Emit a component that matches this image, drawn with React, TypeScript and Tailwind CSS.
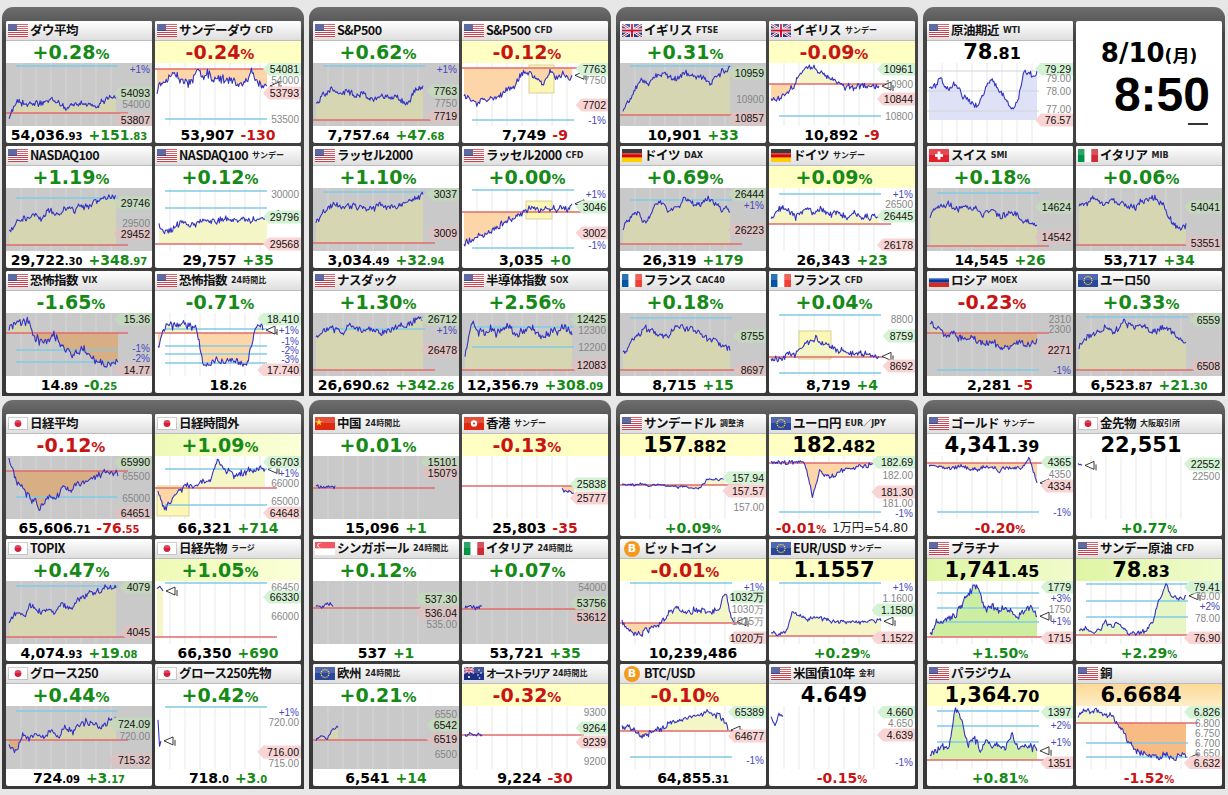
import type { ReactNode } from 'react';

// ── 型 ──
type FlagK = 'us' | 'jp' | 'uk' | 'de' | 'fr' | 'ch' | 'it' | 'ru' | 'eu' | 'cn' | 'hk' | 'sg' | 'au' | 'btc';
type Lb = [number, string, 'h' | 'l' | 'g' | 'p'];
interface Ch {
  g?: boolean;
  x0?: number;
  x1: number;
  s: number[];
  sd: number;
  nz?: number;
  b?: number;
  nb?: boolean;
  bl?: number[];
  gh?: number[];
  lb: Lb[];
  mk?: boolean;
  hl?: [number, number, number, number];
  up?: string;
  dn?: string;
}
interface Cd {
  f: FlagK;
  n: string;
  sub?: string;
  top?: 'w' | 'y' | 'gy' | 'lg' | 'or';
  big: ReactNode;
  bot?: ReactNode;
  ch: Ch;
  nc?: string;
}

// ── テキスト部品 ──
const col = (c: 'g' | 'r') => (c === 'g' ? 'text-[#168a16]' : 'text-[#c91414]');
const P = (v: string, c: 'g' | 'r') => (
  <span className={`text-[19px] ${col(c)}`}>
    {v}
    <span className="text-[14px]">%</span>
  </span>
);
const N = (a: string, b = '') => (
  <span className="text-[21px] text-black">
    {a}
    <span className="text-[16px]">{b}</span>
  </span>
);
const V = (a: string, b = '') => (
  <span className="text-black">
    {a}
    <span className="text-[10px]">{b}</span>
  </span>
);
const C = (a: string, b: string, c: 'g' | 'r') => (
  <span className={col(c)}>
    {a}
    <span className="text-[10px]">{b}</span>
  </span>
);
const P2 = (v: string, c: 'g' | 'r') => (
  <span className={col(c)}>
    {v}
    <span className="text-[10px]">%</span>
  </span>
);

// ── 乱数 ──
function rnd(seed: number) {
  let a = (seed * 7919) >>> 0;
  return () => {
    a = (a + 0x6d2b79f5) >>> 0;
    let t = a;
    t = Math.imul(t ^ (t >>> 15), t | 1);
    t ^= t + Math.imul(t ^ (t >>> 7), t | 61);
    return ((t ^ (t >>> 14)) >>> 0) / 4294967296;
  };
}

function linePts(c: Ch, h: number): [number, number][] {
  const r = rnd(c.sd);
  const x0 = c.x0 ?? 3;
  const n = Math.max(3, Math.round((c.x1 - x0) * 1.1));
  const nz = c.nz ?? 5;
  const out: [number, number][] = [];
  let w = 0;
  for (let i = 0; i < n; i++) {
    const t = (i / (n - 1)) * (c.s.length - 1);
    const k = Math.min(Math.floor(t), c.s.length - 2);
    const f = t - k;
    const base = c.s[k] + (c.s[k + 1] - c.s[k]) * f;
    w = w * 0.6 + (r() - 0.5) * nz * 0.8;
    const j = (r() - 0.5) * nz * 0.9;
    const y = Math.max(1, Math.min(h - 2, base + w + j));
    out.push([+(x0 + (i / (n - 1)) * (c.x1 - x0)).toFixed(1), +y.toFixed(1)]);
  }
  return out;
}

function Chart({ c, h, id }: { c: Ch; h: number; id: string }) {
  const pts = linePts(c, h);
  const x0 = pts[0][0];
  const x1 = pts[pts.length - 1][0];
  const yl = pts[pts.length - 1][1];
  const line = pts.map((p) => p.join(',')).join(' ');
  const b = c.b;
  const grid = c.g ? '#d6d6d6' : '#e8e8e8';
  const upC = c.up ?? (c.g ? '#d6d6b2' : '#f4f6c8');
  const dnC = c.dn ?? (c.g ? '#d8ae84' : '#fcd5a8');
  return (
    <svg width="146" height={h} className="block" fontFamily="'Liberation Sans', Arial, sans-serif">
      {[15, 30, 45, 60, 75, 90, 105].map((x) => (
        <line key={x} x1={x} x2={x} y1={0} y2={h} stroke={grid} strokeWidth="1" />
      ))}
      {c.hl && <rect x={c.hl[0]} y={c.hl[1]} width={c.hl[2]} height={c.hl[3]} fill="#fcf7b4" stroke="#cfc78a" strokeWidth="0.8" />}
      {b !== undefined && (
        <>
          <defs>
            <clipPath id={`${id}a`}>
              <rect x="0" y="0" width="146" height={b} />
            </clipPath>
            <clipPath id={`${id}b`}>
              <rect x="0" y={b} width="146" height={h - b} />
            </clipPath>
          </defs>
          <polygon points={`${line} ${x1},${b} ${x0},${b}`} fill={upC} clipPath={`url(#${id}a)`} />
          <polygon points={`${line} ${x1},${b} ${x0},${b}`} fill={dnC} clipPath={`url(#${id}b)`} />
        </>
      )}
      {c.gh?.map((y) => (
        <line key={`g${y}`} x1={0} x2={112} y1={y} y2={y} stroke="#d4d4d4" strokeWidth="1" />
      ))}
      {c.bl?.map((y) => (
        <line key={`b${y}`} x1={10} x2={112} y1={y} y2={y} stroke="#7fcbe6" strokeWidth="1.3" />
      ))}
      {b !== undefined && !c.nb && <line x1={0} x2={122} y1={b} y2={b} stroke="#e36a6a" strokeWidth="1.3" />}
      <polyline points={line} fill="none" stroke="#3434c4" strokeWidth="1.1" strokeLinejoin="round" />
      {c.mk && (
        <g>
          <polygon
            points={`${x1 + 3},${yl} ${x1 + 12},${yl - 4} ${x1 + 12},${yl + 4}`}
            fill="#fff"
            stroke="#222"
            strokeWidth="0.9"
          />
          <line x1={x1 + 14} x2={x1 + 14} y1={yl - 1} y2={yl + 5} stroke="#222" strokeWidth="0.9" />
        </g>
      )}
      {c.lb.map(([y, t, k], i) => {
        const yy = Math.max(6, Math.min(h - 6, y));
        if (k === 'h' || k === 'l') {
          const w = t.length * 5.6 + 4;
          const x = 146 - w;
          return (
            <g key={i}>
              <polygon
                points={`${x - 6},${yy} ${x},${yy - 6.5} 146,${yy - 6.5} 146,${yy + 6.5} ${x},${yy + 6.5}`}
                fill={k === 'h' ? (c.g ? '#c4d8be' : '#d4f2d4') : c.g ? '#dcc2c2' : '#f9d4d4'}
              />
              <text x="144" y={yy + 3.8} textAnchor="end" fontSize="10.5" fill="#111">
                {t}
              </text>
            </g>
          );
        }
        return (
          <text key={i} x="144" y={yy + 3.5} textAnchor="end" fontSize="10" fill={k === 'p' ? '#4646c0' : '#868686'}>
            {t}
          </text>
        );
      })}
    </svg>
  );
}

// ── 国旗 ──
function Flag({ k }: { k: FlagK }) {
  if (k === 'btc')
    return (
      <span className="w-[16px] h-[16px] rounded-full bg-[#f39a1e] text-white text-[11px] font-bold flex items-center justify-center leading-none">
        B
      </span>
    );
  let body: ReactNode = null;
  if (k === 'us')
    body = (
      <>
        <rect width="20" height="13" fill="#fff" />
        {[0, 2, 4, 6, 8, 10, 12].map((y) => (
          <rect key={y} y={y} width="20" height="1" fill="#d0404c" />
        ))}
        <rect width="9" height="7" fill="#3d4a8c" />
      </>
    );
  if (k === 'jp')
    body = (
      <>
        <rect x="0.5" y="0.5" width="19" height="12" fill="#fff" stroke="#c4c4c4" />
        <circle cx="10" cy="6.5" r="3.4" fill="#d41f3c" />
      </>
    );
  if (k === 'uk' || k === 'au')
    body = (
      <>
        <rect width="20" height="13" fill={k === 'uk' ? '#1f3a8a' : '#1b2f86'} />
        <g transform={k === 'au' ? 'scale(0.5)' : undefined}>
          <path d="M0,0 L20,13 M20,0 L0,13" stroke="#fff" strokeWidth="2.6" />
          <path d="M0,0 L20,13 M20,0 L0,13" stroke="#c8102e" strokeWidth="1" />
          <path d="M10,0 V13 M0,6.5 H20" stroke="#fff" strokeWidth="4" />
          <path d="M10,0 V13 M0,6.5 H20" stroke="#c8102e" strokeWidth="2.2" />
        </g>
        {k === 'au' && (
          <>
            <circle cx="5" cy="10" r="1.1" fill="#fff" />
            <circle cx="15" cy="3" r="0.8" fill="#fff" />
            <circle cx="17" cy="6" r="0.8" fill="#fff" />
            <circle cx="14" cy="8" r="0.8" fill="#fff" />
            <circle cx="15.5" cy="11" r="0.8" fill="#fff" />
          </>
        )}
      </>
    );
  if (k === 'de')
    body = (
      <>
        <rect width="20" height="4.4" fill="#111" />
        <rect y="4.3" width="20" height="4.4" fill="#dd0000" />
        <rect y="8.6" width="20" height="4.4" fill="#ffce00" />
      </>
    );
  if (k === 'fr' || k === 'it')
    body = (
      <>
        <rect width="6.7" height="13" fill={k === 'fr' ? '#0055a4' : '#009246'} />
        <rect x="6.6" width="6.8" height="13" fill="#fff" />
        <rect x="13.3" width="6.7" height="13" fill={k === 'fr' ? '#ef4135' : '#ce2b37'} />
      </>
    );
  if (k === 'ru')
    body = (
      <>
        <rect width="20" height="4.4" fill="#fff" />
        <rect y="4.3" width="20" height="4.4" fill="#0039a6" />
        <rect y="8.6" width="20" height="4.4" fill="#d52b1e" />
      </>
    );
  if (k === 'ch')
    body = (
      <>
        <rect width="20" height="13" fill="#e0202a" />
        <rect x="8.6" y="2.5" width="2.8" height="8" fill="#fff" />
        <rect x="6" y="5.1" width="8" height="2.8" fill="#fff" />
      </>
    );
  if (k === 'eu')
    body = (
      <>
        <rect width="20" height="13" fill="#2a47a0" />
        {Array.from({ length: 12 }).map((_, i) => (
          <circle
            key={i}
            cx={10 + 4 * Math.cos((i * Math.PI) / 6)}
            cy={6.5 + 4 * Math.sin((i * Math.PI) / 6)}
            r="0.7"
            fill="#ffd21f"
          />
        ))}
      </>
    );
  if (k === 'cn')
    body = (
      <>
        <rect width="20" height="13" fill="#de2910" />
        <polygon points="4,1.5 4.9,4.2 7.6,4.2 5.4,5.8 6.2,8.4 4,6.8 1.8,8.4 2.6,5.8 0.4,4.2 3.1,4.2" fill="#ffde00" />
      </>
    );
  if (k === 'hk')
    body = (
      <>
        <rect width="20" height="13" fill="#de2910" />
        <circle cx="10" cy="6.5" r="3.2" fill="#fff" />
        <circle cx="10" cy="6.5" r="1" fill="#de2910" />
      </>
    );
  if (k === 'sg')
    body = (
      <>
        <rect width="20" height="6.5" fill="#ef3340" />
        <rect y="6.5" width="20" height="6.5" fill="#fff" />
        <circle cx="4.5" cy="3.3" r="2.2" fill="#fff" />
        <circle cx="5.4" cy="3.3" r="2" fill="#ef3340" />
      </>
    );
  return (
    <svg width="20" height="13" viewBox="0 0 20 13" className="block">
      {body}
      <rect width="20" height="6" fill="#fff" opacity="0.18" />
    </svg>
  );
}

// ── カード ──
const topCls = {
  w: 'bg-white',
  y: 'bg-[#ffffc4]',
  gy: 'bg-[linear-gradient(90deg,#eefab6,#fbffd8)]',
  lg: 'bg-[linear-gradient(90deg,#dff5a4,#f1fbcc)]',
  or: 'bg-[linear-gradient(#fcd998,#fdeec6)]',
};

function Card({ d, id }: { d: Cd; id: string }) {
  const h = d.bot === undefined ? 80 : 63;
  return (
    <div className="h-[122px] bg-white rounded-[2px] flex flex-col overflow-hidden">
      <div className="h-[20px] shrink-0 flex items-center bg-[linear-gradient(#ffffff,#dedede)] border-b border-[#bdbdbd]">
        <div className="w-[24px] shrink-0 flex justify-center">
          <Flag k={d.f} />
        </div>
        <span className={`font-bold leading-none whitespace-nowrap text-[#111] font-['Noto_Sans_CJK_JP',sans-serif] ${d.nc ?? 'text-[12.5px] tracking-[-0.5px]'}`}>
          {d.n}
        </span>
        {d.sub && (
          <span className="ml-[4px] text-[8px] font-bold leading-none whitespace-nowrap text-[#222] font-['DejaVu_Sans','Noto_Sans_CJK_JP',sans-serif]">
            {d.sub}
          </span>
        )}
      </div>
      <div className={`h-[22px] shrink-0 flex items-center justify-center pr-[16px] font-bold leading-none ${topCls[d.top ?? 'w']}`}>
        {d.big}
      </div>
      <div className={d.ch.g ? 'bg-[#c9c9c9]' : 'bg-white'}>
        <Chart c={d.ch} h={h} id={id} />
      </div>
      {d.bot !== undefined && (
        <div className="h-[17px] flex items-center justify-center gap-[6px] text-[14px] font-bold leading-none whitespace-nowrap">
          {d.bot}
        </div>
      )}
    </div>
  );
}

function Clock() {
  return (
    <div className="h-[122px] bg-white rounded-[2px] flex flex-col items-center">
      <div className="mt-[19px] text-[26px] font-bold leading-none text-black">
        8/10<span className="text-[17px]">(月)</span>
      </div>
      <div className="mt-[5px] self-end mr-[12px] text-[48px] font-bold leading-none text-black font-['Liberation_Sans',Arial,sans-serif]">
        8:50
      </div>
      <div className="mt-[4px] self-end mr-[14px] w-[20px] h-[2px] bg-[#333]" />
    </div>
  );
}

// ── データ ──
const TOP: (Cd | 'clock')[][] = [
  [
    { f: 'us', n: 'ダウ平均', big: P('+0.28', 'g'), bot: <>{V('54,036', '.93')}{C('+151', '.83', 'g')}</>, ch: { g: true, x1: 110, sd: 1, s: [54, 38, 40, 42, 37, 40, 44, 41, 40, 45, 34, 35], b: 50, bl: [3], lb: [[3, '+1%', 'p'], [30, '54093', 'h'], [41, '54000', 'g'], [57, '53807', 'l']] } },
    { f: 'us', n: 'サンデーダウ', sub: 'CFD', top: 'y', big: P('-0.24', 'r'), bot: <>{V('53,907')}{C('-130', '', 'r')}</>, ch: { x0: 2, x1: 112, sd: 2, nz: 7, s: [26, 20, 10, 16, 22, 8, 12, 14, 16, 18, 17, 21, 10, 22, 22], b: 6, bl: [56], lb: [[5, '54081', 'h'], [17, '54000', 'g'], [30, '53793', 'l'], [56, '53500', 'g']], mk: true } },
    { f: 'us', n: 'NASDAQ100', big: P('+1.19', 'g'), bot: <>{V('29,722', '.30')}{C('+348', '.97', 'g')}</>, ch: { g: true, x1: 110, sd: 3, s: [42, 32, 30, 26, 30, 22, 25, 20, 22, 18, 16, 12, 10, 8], b: 57, bl: [10], lb: [[15, '29746', 'h'], [35, '29500', 'g'], [46, '29452', 'l']] } },
    { f: 'us', n: 'NASDAQ100', sub: 'サンデー', big: P('+0.12', 'g'), bot: <>{V('29,757')}{C('+35', '', 'g')}</>, ch: { x0: 4, x1: 112, sd: 4, s: [36, 44, 38, 36, 35, 33, 34, 32, 31, 31, 32, 30, 30], b: 56, bl: [3, 20], lb: [[3, '30000', 'g'], [29, '29796', 'h'], [56, '29568', 'l']], mk: true } },
    { f: 'us', n: '恐怖指数', sub: 'VIX', big: P('-1.65', 'g'), bot: <>{V('14', '.89')}{C('-0', '.25', 'g')}</>, ch: { g: true, x1: 112, sd: 5, nz: 6, s: [16, 12, 8, 26, 30, 22, 34, 40, 34, 44, 48, 50, 52], b: 20, bl: [37, 49], lb: [[4, '15.36', 'h'], [35, '-1%', 'p'], [45, '-2%', 'p'], [58, '14.77', 'l']] } },
    { f: 'us', n: '恐怖指数', sub: '24時間比', big: P('-0.71', 'g'), bot: V('18', '.26'), ch: { x1: 108, sd: 6, nz: 6, s: [34, 12, 12, 13, 12, 14, 50, 52, 46, 50, 44, 52, 50, 14, 12], b: 20, bl: [16, 33, 41, 50], lb: [[4, '18.410', 'h'], [17, '+1%', 'p'], [28, '-1%', 'p'], [37, '-2%', 'p'], [46, '-3%', 'p'], [58, '17.740', 'l']], mk: true } },
  ],
  [
    { f: 'us', n: 'S&P500', big: P('+0.62', 'g'), bot: <>{V('7,757', '.64')}{C('+47', '.68', 'g')}</>, ch: { g: true, x1: 110, sd: 7, s: [40, 32, 26, 30, 28, 32, 28, 36, 37, 32, 34, 36, 40, 26, 23], b: 57, bl: [3], lb: [[3, '+1%', 'p'], [28, '7763', 'h'], [40, '7750', 'g'], [53, '7719', 'l']] } },
    { f: 'us', n: 'S&P500', sub: 'CFD', top: 'y', big: P('-0.12', 'r'), bot: <>{V('7,749')}{C('-9', '', 'r')}</>, ch: { x0: 2, x1: 110, sd: 8, s: [33, 36, 39, 37, 34, 31, 27, 22, 12, 8, 14, 20, 8, 16, 11, 13], b: 5, bl: [57], hl: [67, 2, 25, 28], lb: [[5, '7763', 'h'], [17, '7750', 'g'], [42, '7702', 'l'], [57, '-1%', 'p']], mk: true } },
    { f: 'us', n: 'ラッセル2000', big: P('+1.10', 'g'), bot: <>{V('3,034', '.49')}{C('+32', '.94', 'g')}</>, ch: { g: true, x1: 110, sd: 9, s: [32, 22, 16, 20, 18, 20, 22, 18, 15, 20, 18, 15, 10, 6], b: 55, bl: [4], lb: [[3, '3037', 'h'], [45, '3009', 'l']] } },
    { f: 'us', n: 'ラッセル2000', sub: 'CFD', big: P('+0.00', 'g'), bot: <>{V('3,035')}{C('+0', '', 'g')}</>, ch: { x0: 2, x1: 110, sd: 10, s: [56, 52, 48, 45, 42, 36, 32, 28, 22, 17, 21, 20, 20, 21, 20], b: 24, bl: [2, 60], hl: [64, 13, 26, 18], lb: [[5, '+1%', 'p'], [19, '3046', 'h'], [45, '3002', 'l'], [60, '-1%', 'p']], mk: true } },
    { f: 'us', n: 'ナスダック', big: P('+1.30', 'g'), bot: <>{V('26,690', '.62')}{C('+342', '.26', 'g')}</>, ch: { g: true, x1: 110, sd: 11, s: [26, 18, 15, 20, 12, 16, 18, 14, 20, 16, 12, 14, 8, 5], b: 57, bl: [16], lb: [[4, '26712', 'h'], [17, '+1%', 'p'], [37, '26478', 'l']] } },
    { f: 'us', n: '半導体指数', sub: 'SOX', big: P('+2.56', 'g'), bot: <>{V('12,356', '.79')}{C('+308', '.09', 'g')}</>, ch: { g: true, x1: 110, sd: 12, nz: 7, s: [42, 10, 22, 15, 20, 18, 15, 22, 18, 14, 20, 26, 15, 18, 10, 20], b: 57, bl: [14, 34], lb: [[4, '12425', 'h'], [17, '12300', 'g'], [34, '12200', 'g'], [52, '12083', 'l']] } },
  ],
  [
    { f: 'uk', n: 'イギリス', sub: 'FTSE', big: P('+0.31', 'g'), bot: <>{V('10,901')}{C('+33', '', 'g')}</>, ch: { g: true, x1: 110, sd: 13, s: [46, 32, 16, 20, 10, 13, 16, 10, 12, 16, 20, 10, 6], b: 52, bl: [3], lb: [[10, '10959', 'h'], [36, '10900', 'g'], [55, '10857', 'l']] } },
    { f: 'uk', n: 'イギリス', sub: 'サンデー', top: 'y', big: P('-0.09', 'r'), bot: <>{V('10,892')}{C('-9', '', 'r')}</>, ch: { x0: 2, x1: 110, sd: 14, s: [38, 35, 30, 18, 5, 3, 10, 16, 20, 22, 25, 22, 24, 25], b: 21, bl: [53], lb: [[5, '10961', 'h'], [21, '10900', 'g'], [36, '10844', 'l'], [53, '10800', 'g']], mk: true } },
    { f: 'de', n: 'ドイツ', sub: 'DAX', big: P('+0.69', 'g'), bot: <>{V('26,319')}{C('+179', '', 'g')}</>, ch: { g: true, x1: 110, sd: 15, s: [40, 30, 25, 35, 20, 15, 25, 20, 12, 15, 18, 12, 15, 20, 25], b: 56, bl: [12], lb: [[4, '26444', 'h'], [17, '+1%', 'p'], [42, '26223', 'l']] } },
    { f: 'de', n: 'ドイツ', sub: 'サンデー', top: 'y', big: P('+0.09', 'g'), bot: <>{V('26,343')}{C('+23', '', 'g')}</>, ch: { x0: 2, x1: 110, sd: 16, s: [32, 24, 22, 28, 20, 25, 22, 28, 24, 30, 26, 30, 28, 30], b: 36, bl: [6], lb: [[4, '+1%', 'p'], [16, '26500', 'g'], [28, '26445', 'h'], [58, '26178', 'l']], mk: true } },
    { f: 'fr', n: 'フランス', sub: 'CAC40', big: P('+0.18', 'g'), bot: <>{V('8,715')}{C('+15', '', 'g')}</>, ch: { g: true, x1: 110, sd: 17, s: [42, 28, 25, 15, 20, 22, 25, 10, 15, 18, 20, 26, 28, 32, 36], b: 57, bl: [5], lb: [[23, '8755', 'h'], [57, '8697', 'l']] } },
    { f: 'fr', n: 'フランス', sub: 'CFD', big: P('+0.04', 'g'), bot: <>{V('8,719')}{C('+4', '', 'g')}</>, ch: { x0: 2, x1: 110, sd: 18, s: [46, 44, 42, 38, 30, 25, 32, 35, 38, 42, 40, 42, 44], b: 44, bl: [2, 60], hl: [30, 18, 32, 28], lb: [[5, '8800', 'g'], [23, '8759', 'h'], [53, '8692', 'l']], mk: true } },
  ],
  [
    { f: 'us', n: '原油期近', sub: 'WTI', big: N('78', '.81'), ch: { x0: 2, x1: 110, sd: 19, s: [26, 22, 16, 28, 20, 30, 36, 44, 38, 22, 16, 26, 36, 44, 40, 6, 12, 9], b: 57, nb: true, up: '#dfe1f7', gh: [8, 28, 48], lb: [[4, '79.29', 'h'], [15, '79.00', 'g'], [28, '78.00', 'g'], [46, '77.00', 'g'], [57, '76.57', 'l']], mk: true } },
    'clock',
    { f: 'ch', n: 'スイス', sub: 'SMI', big: P('+0.18', 'g'), bot: <>{V('14,545')}{C('+26', '', 'g')}</>, ch: { g: true, x1: 110, sd: 20, s: [26, 20, 15, 22, 18, 20, 26, 22, 28, 25, 30, 35, 38], b: 58, bl: [5], lb: [[19, '14624', 'h'], [49, '14542', 'l']] } },
    { f: 'it', n: 'イタリア', sub: 'MIB', big: P('+0.06', 'g'), bot: <>{V('53,717')}{C('+34', '', 'g')}</>, ch: { g: true, x1: 110, sd: 21, s: [20, 14, 10, 18, 12, 15, 20, 18, 12, 10, 15, 30, 40, 38], b: 57, lb: [[19, '54041', 'h'], [55, '53551', 'l']] } },
    { f: 'ru', n: 'ロシア', sub: 'MOEX', big: P('-0.23', 'r'), bot: <>{V('2,281')}{C('-5', '', 'r')}</>, ch: { g: true, x1: 110, sd: 22, s: [10, 15, 25, 20, 28, 25, 30, 28, 32, 35, 30, 28, 32, 30], b: 20, bl: [57], lb: [[4, '2310', 'g'], [16, '2300', 'g'], [37, '2271', 'l'], [57, '-1%', 'p']] } },
    { f: 'eu', n: 'ユーロ50', big: P('+0.33', 'g'), bot: <>{V('6,523', '.87')}{C('+21', '.30', 'g')}</>, ch: { g: true, x1: 110, sd: 23, s: [35, 25, 20, 15, 18, 10, 15, 12, 20, 18, 15, 25, 30], b: 57, bl: [4], lb: [[7, '6559', 'h'], [53, '6508', 'l']] } },
  ],
];

const BOTTOM: (Cd | 'clock')[][] = [
  [
    { f: 'jp', n: '日経平均', big: P('-0.12', 'r'), bot: <>{V('65,606', '.71')}{C('-76', '.55', 'r')}</>, ch: { g: true, x0: 3, x1: 112, sd: 24, s: [2, 25, 35, 45, 50, 40, 42, 30, 35, 28, 25, 20, 18, 15, 18], b: 15, bl: [41], lb: [[4, '65990', 'h'], [20, '65500', 'g'], [42, '65000', 'g'], [57, '64651', 'l']] } },
    { f: 'jp', n: '日経時間外', top: 'gy', big: P('+1.09', 'g'), bot: <>{V('66,321')}{C('+714', '', 'g')}</>, ch: { x0: 3, x1: 110, sd: 25, s: [34, 54, 45, 35, 31, 30, 28, 26, 25, 4, 15, 18, 20, 16, 14, 12, 12], b: 32, bl: [13, 49], hl: [2, 30, 32, 30], lb: [[4, '66703', 'h'], [17, '+1%', 'p'], [27, '66000', 'g'], [45, '65000', 'g'], [58, '64648', 'l']], mk: true } },
    { f: 'jp', n: 'TOPIX', big: P('+0.47', 'g'), bot: <>{V('4,074', '.93')}{C('+19', '.08', 'g')}</>, ch: { g: true, x1: 110, sd: 26, s: [40, 30, 35, 25, 30, 28, 32, 22, 28, 18, 15, 12, 10, 8, 5], b: 56, bl: [5], lb: [[6, '4079', 'h'], [51, '4045', 'l']] } },
    { f: 'jp', n: '日経先物', sub: 'ラージ', top: 'gy', big: P('+1.05', 'g'), bot: <>{V('66,350')}{C('+690', '', 'g')}</>, ch: { x0: 2, x1: 8, sd: 27, nz: 2, s: [8, 6, 10], b: 56, bl: [2], lb: [[4, '66450', 'g'], [16, '66330', 'h'], [35, '66000', 'g']], mk: true } },
    { f: 'jp', n: 'グロース250', big: P('+0.44', 'g'), bot: <>{V('724', '.09')}{C('+3', '.17', 'g')}</>, ch: { g: true, x1: 110, sd: 28, s: [40, 46, 30, 35, 28, 32, 25, 30, 22, 28, 20, 15, 18, 22, 15, 12], b: 34, bl: [5], lb: [[18, '724.09', 'h'], [30, '720.00', 'g'], [54, '715.32', 'l']] } },
    { f: 'jp', n: 'グロース250先物', big: P('+0.42', 'g'), bot: <>{V('718', '.0')}{C('+3', '.0', 'g')}</>, ch: { x0: 3, x1: 6, sd: 29, nz: 2, s: [14, 40, 34], bl: [1], lb: [[4, '+1%', 'p'], [16, '720.00', 'g'], [46, '716.00', 'l'], [57, '715.00', 'g']], mk: true } },
  ],
  [
    { f: 'cn', n: '中国', sub: '24時間比', big: P('+0.01', 'g'), bot: <>{V('15,096')}{C('+1', '', 'g')}</>, ch: { g: true, x0: 3, x1: 22, sd: 30, nz: 3, s: [30, 32, 30, 31], b: 32, lb: [[4, '15101', 'h'], [17, '15079', 'l']] } },
    { f: 'hk', n: '香港', sub: 'サンデー', top: 'y', big: P('-0.13', 'r'), bot: <>{V('25,803')}{C('-35', '', 'r')}</>, ch: { x0: 100, x1: 112, sd: 31, nz: 3, s: [33, 36, 38], b: 30, lb: [[28, '25838', 'h'], [42, '25777', 'l']] } },
    { f: 'sg', n: 'シンガポール', sub: '24時間比', big: P('+0.12', 'g'), bot: <>{V('537')}{C('+1', '', 'g')}</>, ch: { g: true, x0: 3, x1: 20, sd: 32, nz: 3, s: [24, 26, 22, 25], b: 27, lb: [[18, '537.30', 'h'], [32, '536.04', 'l'], [43, '535.00', 'g']] } },
    { f: 'it', n: 'イタリア', sub: '24時間比', big: P('+0.07', 'g'), bot: <>{V('53,721')}{C('+35', '', 'g')}</>, ch: { g: true, x0: 3, x1: 20, sd: 33, nz: 3, s: [26, 24, 27, 25], b: 28, lb: [[4, '54000', 'g'], [22, '53756', 'h'], [36, '53612', 'l']] } },
    { f: 'eu', n: '欧州', sub: '24時間比', big: P('+0.21', 'g'), bot: <>{V('6,541')}{C('+14', '', 'g')}</>, ch: { g: true, x0: 3, x1: 25, sd: 34, nz: 3, s: [33, 30, 32, 24, 22], b: 34, lb: [[8, '6550', 'g'], [19, '6542', 'h'], [33, '6519', 'l'], [48, '6500', 'g']] } },
    { f: 'au', n: 'オーストラリア', nc: 'text-[11px] tracking-[-2px]', sub: '24時間比', top: 'y', big: P('-0.32', 'r'), bot: <>{V('9,224')}{C('-30', '', 'r')}</>, ch: { x0: 3, x1: 20, sd: 35, nz: 3, s: [29, 27, 30, 28], b: 29, lb: [[6, '9300', 'g'], [22, '9264', 'h'], [36, '9239', 'l'], [55, '9200', 'g']] } },
  ],
  [
    { f: 'us', n: 'サンデードル', sub: '調整済', top: 'y', big: N('157', '.882'), bot: P2('+0.09', 'g'), ch: { x0: 2, x1: 104, sd: 36, nz: 2, s: [29, 29, 28, 29, 30, 29, 30, 31, 32, 33, 24, 23, 24], b: 29, lb: [[22, '157.94', 'h'], [35, '157.57', 'l'], [51, '157.00', 'g']], mk: true } },
    { f: 'eu', n: 'ユーロ円', sub: 'EUR／JPY', top: 'y', big: N('182', '.482'), bot: <>{P2('-0.01', 'r')}<span className="text-[12px] font-normal text-[#222]">1万円=54.80</span></>, ch: { x0: 2, x1: 112, sd: 37, nz: 4, s: [7, 6, 8, 7, 6, 8, 39, 15, 20, 22, 18, 14, 12, 10, 9, 8, 7], b: 7, bl: [56], lb: [[5, '182.69', 'h'], [19, '182.00', 'g'], [36, '181.30', 'l'], [47, '181.00', 'g'], [57, '-1%', 'p']], mk: true } },
    { f: 'btc', n: 'ビットコイン', top: 'y', big: P('-0.01', 'r'), bot: V('10,239,486'), ch: { x0: 2, x1: 114, sd: 38, s: [41, 50, 54, 48, 46, 42, 30, 26, 28, 29, 30, 32, 28, 11, 44], b: 42, bl: [2], lb: [[3, '+1%', 'p'], [16, '1032万', 'h'], [28, '1030万', 'g'], [40, '1025万', 'g'], [57, '1020万', 'l']], mk: true } },
    { f: 'eu', n: 'EUR/USD', sub: 'サンデー', top: 'y', big: N('1.1557'), bot: P2('+0.29', 'g'), ch: { x0: 2, x1: 112, sd: 39, nz: 3, s: [53, 53, 52, 30, 35, 38, 36, 38, 40, 41, 41, 41, 41, 40, 40, 39], b: 55, bl: [2], lb: [[4, '+1%', 'p'], [17, '1.1600', 'g'], [29, '1.1580', 'h'], [57, '1.1522', 'l']], mk: true } },
    { f: 'btc', n: 'BTC/USD', top: 'y', big: P('-0.10', 'r'), bot: V('64,855', '.31'), ch: { x0: 2, x1: 108, sd: 40, s: [19, 22, 29, 28, 26, 20, 16, 15, 12, 10, 8, 6, 10, 22], b: 25, bl: [51], lb: [[4, '65389', 'h'], [30, '64677', 'l'], [54, '-1%', 'p']], mk: true } },
    { f: 'us', n: '米国債10年', sub: '金利', big: N('4.649'), bot: P2('-0.15', 'r'), ch: { x0: 2, x1: 14, sd: 41, nz: 3, s: [10, 18, 8, 12], lb: [[4, '4.660', 'h'], [17, '4.650', 'g'], [29, '4.639', 'l'], [56, '-1%', 'p']] } },
  ],
  [
    { f: 'us', n: 'ゴールド', sub: 'サンデー', big: N('4,341', '.39'), bot: P2('-0.20', 'r'), ch: { x0: 2, x1: 110, sd: 42, nz: 3, s: [9, 10, 12, 11, 10, 12, 13, 12, 11, 14, 12, 13, 12, 2, 27], b: 7, bl: [56], lb: [[4, '4365', 'h'], [18, '4350', 'g'], [30, '4334', 'l'], [56, '-1%', 'p']], mk: true } },
    { f: 'jp', n: '金先物', sub: '大阪取引所', big: N('22,551'), bot: P2('+0.77', 'g'), ch: { x0: 2, x1: 6, sd: 43, nz: 2, s: [7, 8], lb: [[8, '22552', 'h'], [20, '22500', 'g']], mk: true } },
    { f: 'us', n: 'プラチナ', top: 'lg', big: N('1,741', '.45'), bot: P2('+1.50', 'g'), ch: { x0: 3, x1: 110, sd: 44, s: [55, 40, 38, 38, 36, 25, 15, 5, 12, 30, 25, 30, 28, 32, 35, 30, 28, 36], b: 56, up: '#cdeea0', bl: [12, 27, 41], lb: [[3, '1779', 'h'], [17, '+3%', 'p'], [28, '1750', 'g'], [40, '+1%', 'p'], [57, '1715', 'l']], mk: true } },
    { f: 'us', n: 'サンデー原油', sub: 'CFD', top: 'lg', big: N('78', '.83'), bot: P2('+2.29', 'g'), ch: { x0: 3, x1: 110, sd: 45, nz: 4, s: [50, 48, 52, 50, 40, 45, 42, 50, 53, 52, 48, 40, 20, 3, 15, 18, 17], b: 54, up: '#e6f6c4', bl: [3, 20, 36], lb: [[3, '79.41', 'h'], [15, '79.00', 'g'], [25, '+2%', 'p'], [37, '78.00', 'g'], [57, '76.90', 'l']], mk: true } },
    { f: 'us', n: 'パラジウム', top: 'y', big: N('1,364', '.70'), bot: P2('+0.81', 'g'), ch: { x0: 3, x1: 110, sd: 46, s: [50, 45, 40, 42, 2, 10, 40, 30, 45, 35, 40, 38, 42, 30, 40, 42, 40, 44], b: 54, up: '#d4f0a8', bl: [5, 20, 36], lb: [[3, '1397', 'h'], [19, '+2%', 'p'], [36, '+1%', 'p'], [57, '1351', 'l']], mk: true } },
    { f: 'us', n: '銅', top: 'or', big: N('6.6684'), bot: P2('-1.52', 'r'), ch: { x0: 2, x1: 110, sd: 47, s: [12, 3, 6, 5, 7, 10, 19, 30, 40, 45, 48, 50, 52, 49, 52, 50, 48], b: 17, dn: '#f9bb84', bl: [37, 51], lb: [[4, '6.826', 'h'], [17, '6.800', 'g'], [27, '6.750', 'g'], [37, '6.700', 'g'], [47, '6.650', 'g'], [58, '6.632', 'l']], mk: true } },
  ],
];

export default function App() {
  return (
    <div className="w-[1228px] h-[795px] overflow-hidden bg-[#e7e7e7] pt-[7px] flex flex-col gap-[4px] text-[#111] font-['DejaVu_Sans','Noto_Sans_CJK_JP',sans-serif]">
      {[TOP, BOTTOM].map((row, ri) => (
        <div key={ri} className="flex gap-[5px] px-[2px]">
          {row.map((panel, pi) => (
            <div
              key={pi}
              className="w-[302px] rounded-t-[11px] bg-[linear-gradient(#6e6e6e,#454545_28px,#383838)] pt-[14px] pb-[3px] pl-[4px] pr-[3px] grid grid-cols-[146px_146px] auto-rows-[122px] gap-[3px]"
            >
              {panel.map((d, ci) =>
                d === 'clock' ? <Clock key={ci} /> : <Card key={ci} d={d} id={`c${ri}${pi}${ci}`} />
              )}
            </div>
          ))}
        </div>
      ))}
    </div>
  );
}
